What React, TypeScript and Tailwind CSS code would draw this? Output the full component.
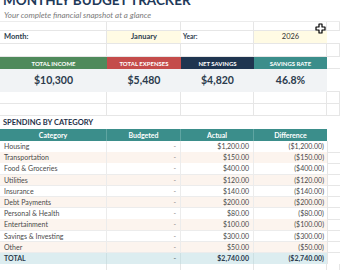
import React from "react";

const rows = [
  { name: "Housing", actual: "$1,200.00", diff: "($1,200.00)" },
  { name: "Transportation", actual: "$150.00", diff: "($150.00)" },
  { name: "Food & Groceries", actual: "$400.00", diff: "($400.00)" },
  { name: "Utilities", actual: "$120.00", diff: "($120.00)" },
  { name: "Insurance", actual: "$140.00", diff: "($140.00)" },
  { name: "Debt Payments", actual: "$200.00", diff: "($200.00)" },
  { name: "Personal & Health", actual: "$80.00", diff: "($80.00)" },
  { name: "Entertainment", actual: "$100.00", diff: "($100.00)" },
  { name: "Savings & Investing", actual: "$300.00", diff: "($300.00)" },
  { name: "Other", actual: "$50.00", diff: "($50.00)" },
];

const cards = [
  { label: "TOTAL INCOME", value: "$10,300", bg: "bg-[#4f8a5b]" },
  { label: "TOTAL EXPENSES", value: "$5,480", bg: "bg-[#c44c4b]" },
  { label: "NET SAVINGS", value: "$4,820", bg: "bg-[#1f3550]" },
  { label: "SAVINGS RATE", value: "46.8%", bg: "bg-[#3b8e8b]" },
];

const grid = "grid grid-cols-[107px_74px_73px_73px_1fr]";

// plain empty sheet row with faint gridlines
function EmptyRow({ h }: { h: string }) {
  return (
    <div className={`${grid} ${h}`}>
      {[0, 1, 2, 3, 4].map((i) => (
        <div key={i} className="border-r border-b border-[#e6e6e6]" />
      ))}
    </div>
  );
}

export default function App() {
  return (
    <div className="relative w-[340px] h-[270px] overflow-hidden bg-white font-['Lato','Liberation_Sans',sans-serif] text-[#333]">
      {/* title, cut off by the top of the window */}
      <div className="h-[9px] overflow-hidden px-[3px]">
        <div className="-mt-[6.5px] text-[13.5px] leading-[13.5px] font-bold text-[#1f3a5a] whitespace-nowrap">
          MONTHLY BUDGET TRACKER
        </div>
      </div>
      <div className="h-[13px] flex items-center px-[4px] border-b border-[#ececec] text-[8px] italic text-[#7a7a7a]">
        Your complete financial snapshot at a glance
      </div>
      <EmptyRow h="h-[9px]" />

      {/* month / year */}
      <div className={`${grid} h-[13px] text-[7.5px]`}>
        <div className="flex items-center px-[4px] font-bold text-[#2b3b4d] border-r border-b border-[#e6e6e6]">Month:</div>
        <div className="flex items-center justify-center font-bold text-[#2b3b4d] bg-[#fffbe4] border-b border-[#e6e6e6]">January</div>
        <div className="flex items-center px-[2px] text-[6.5px] font-bold text-[#2b3b4d] border-r border-b border-[#e6e6e6]">Year:</div>
        <div className="flex items-center justify-center text-[#333] bg-[#fffbe4] border-b border-[#e6e6e6]">2026</div>
        <div className="border-b border-[#e6e6e6]" />
      </div>
      <EmptyRow h="h-[13px]" />

      {/* summary cards */}
      <div className={`${grid} h-[12px]`}>
        {cards.map((c) => (
          <div key={c.label} className={`${c.bg} flex items-center justify-center text-white text-[6px] font-bold`}>
            {c.label}
          </div>
        ))}
        <div className="border-b border-[#e6e6e6]" />
      </div>
      <div className={`${grid} h-[23px]`}>
        {cards.map((c) => (
          <div key={c.label} className="bg-[#f1f3f5] flex items-center justify-center text-[10.5px] font-bold text-[#2b3b4d]">
            {c.value}
          </div>
        ))}
        <div className="border-b border-[#e6e6e6]" />
      </div>
      <EmptyRow h="h-[12px]" />
      <EmptyRow h="h-[12px]" />

      {/* spending table */}
      <div className="h-[13px] flex items-center px-[3px] text-[7.5px] font-bold text-[#1f3048]">
        SPENDING BY CATEGORY
      </div>
      <div className={`${grid} h-[12px] text-[7px] font-bold text-white`}>
        <div className="bg-[#3b8e8b] flex items-center justify-center border-r border-[#5fa5a2]">Category</div>
        <div className="bg-[#3b8e8b] flex items-center justify-center border-r border-[#5fa5a2]">Budgeted</div>
        <div className="bg-[#3b8e8b] flex items-center justify-center border-r border-[#5fa5a2]">Actual</div>
        <div className="bg-[#3b8e8b] flex items-center justify-center">Difference</div>
        <div />
      </div>
      {rows.map((r, i) => (
        <div key={r.name} className={`${grid} h-[11.2px] text-[7px] text-[#4a4a4a]`}>
          <div className={`${i % 2 ? "bg-[#fcf4ee]" : "bg-white"} flex items-center px-[4px] border-r border-b border-[#ececec]`}>{r.name}</div>
          <div className={`${i % 2 ? "bg-[#fcf4ee]" : "bg-white"} flex items-center justify-end pr-[4px] text-[#888] border-r border-b border-[#ececec]`}>-</div>
          <div className={`${i % 2 ? "bg-[#fcf4ee]" : "bg-white"} flex items-center justify-end pr-[4px] border-r border-b border-[#ececec]`}>{r.actual}</div>
          <div className={`${i % 2 ? "bg-[#fcf4ee]" : "bg-white"} flex items-center justify-end pr-[3px] border-b border-[#ececec]`}>{r.diff}</div>
          <div className="border-l border-b border-[#e6e6e6]" />
        </div>
      ))}
      <div className={`${grid} h-[11.2px] text-[7px] font-bold text-[#2b3b4d]`}>
        <div className="bg-[#dcedf0] flex items-center px-[4px] border-r border-[#cde0e3]">TOTAL</div>
        <div className="bg-[#dcedf0] flex items-center justify-end pr-[4px] text-[#7a8a8a] border-r border-[#cde0e3]">-</div>
        <div className="bg-[#dcedf0] flex items-center justify-end pr-[4px] border-r border-[#cde0e3]">$2,740.00</div>
        <div className="bg-[#dcedf0] flex items-center justify-end pr-[3px]">($2,740.00)</div>
        <div className="border-l border-[#e6e6e6]" />
      </div>
      <EmptyRow h="h-[12px]" />

      {/* excel cell cursor */}
      <svg className="absolute left-[315px] top-[23px]" width="11" height="11" viewBox="0 0 11 11">
        <path d="M4 1h3v3h3v3H7v3H4V7H1V4h3z" fill="#fff" stroke="#000" strokeWidth="1.2" strokeLinejoin="round" />
      </svg>
    </div>
  );
}
